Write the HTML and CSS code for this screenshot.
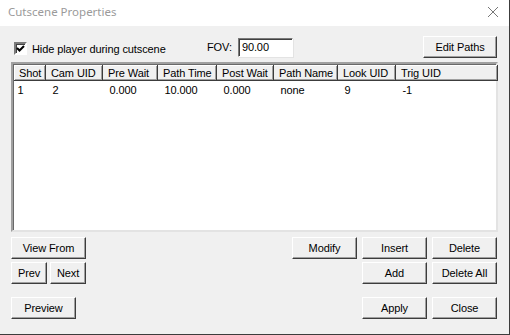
FILE: index.html
```html
<!DOCTYPE html>
<html lang="en">
<head>
    <meta charset="UTF-8">
    <title>Cutscene Properties</title>
    <link rel="stylesheet" href="styles.css">
</head>
<body>
    <div class="window">
        <div class="titlebar">
            <span class="title">Cutscene Properties</span>
            <svg class="close" width="12" height="12" viewBox="0 0 12 12">
                <path d="M1 1 L11 11 M11 1 L1 11" stroke="#777" stroke-width="1" fill="none"/>
            </svg>
        </div>

        <div class="top-row">
            <label class="check">
                <span class="check-box">
                    <svg width="9" height="9" viewBox="0 0 9 9">
                        <path d="M1 4 L3.5 6.5 L8 2" stroke="#000" stroke-width="2" fill="none"/>
                    </svg>
                </span>
                Hide player during cutscene
            </label>
            <div class="fov">
                <span>FOV:</span>
                <span class="field">90.00</span>
            </div>
            <button class="btn edit-paths">Edit Paths</button>
        </div>

        <div class="list">
            <table>
                <colgroup>
                    <col style="width: 31px">
                    <col style="width: 57px">
                    <col style="width: 55px">
                    <col style="width: 59px">
                    <col style="width: 57px">
                    <col style="width: 64px">
                    <col style="width: 58px">
                    <col>
                </colgroup>
                <thead>
                    <tr>
                        <th>Shot</th>
                        <th>Cam UID</th>
                        <th>Pre Wait</th>
                        <th>Path Time</th>
                        <th>Post Wait</th>
                        <th>Path Name</th>
                        <th>Look UID</th>
                        <th>Trig UID</th>
                    </tr>
                </thead>
                <tbody>
                    <tr>
                        <td>1</td>
                        <td>2</td>
                        <td>0.000</td>
                        <td>10.000</td>
                        <td>0.000</td>
                        <td>none</td>
                        <td>9</td>
                        <td>-1</td>
                    </tr>
                </tbody>
            </table>
        </div>

        <div class="button-row first">
            <div class="group">
                <button class="btn wide">View From</button>
            </div>
            <div class="group">
                <button class="btn">Modify</button>
                <button class="btn">Insert</button>
                <button class="btn">Delete</button>
            </div>
        </div>
        <div class="button-row">
            <div class="group small-gap">
                <button class="btn small">Prev</button>
                <button class="btn small">Next</button>
            </div>
            <div class="group">
                <button class="btn">Add</button>
                <button class="btn">Delete All</button>
            </div>
        </div>
        <div class="button-row last">
            <div class="group">
                <button class="btn">Preview</button>
            </div>
            <div class="group">
                <button class="btn">Apply</button>
                <button class="btn">Close</button>
            </div>
        </div>
    </div>
</body>
</html>
```

FILE: styles.css
```css
/* Classic Win32 dialog look */
body {
    margin: 0;
    background-color: #f0f0f0;
    font-family: "Liberation Sans", Arial, sans-serif;
    font-size: 11px;
    letter-spacing: -0.1px;
    color: #000;
}

.window {
    width: 509px;
    height: 334px;
    border-right: 1px solid #3c3c3c;
    border-bottom: 1px solid #3c3c3c;
    background-color: #f0f0f0;
}

.titlebar {
    height: 26px;
    background-color: #fff;
    display: flex;
    align-items: center;
    justify-content: space-between;
    padding: 0 10px 0 8px;
}

.title {
    font-family: "Noto Sans", "Open Sans", sans-serif;
    font-size: 11.5px;
    letter-spacing: 0;
    color: #9a9a9a;
    margin-top: -3px;
}

.close {
    margin-top: -2px;
}

.top-row {
    display: flex;
    align-items: center;
    height: 22px;
    margin: 10px 12px 0 14px;
}

.check {
    display: flex;
    align-items: center;
    gap: 5px;
    width: 193px;
    margin-top: 3px;
}

.check-box {
    width: 9px;
    height: 9px;
    background-color: #fff;
    border: 2px solid;
    border-color: #7a7a7a #fff #fff #7a7a7a;
    box-shadow: inset 1px 1px #404040;
    display: flex;
    align-items: center;
    justify-content: center;
}

.fov {
    display: flex;
    align-items: center;
    gap: 6px;
    flex: 1;
}

.field {
    width: 50px;
    height: 17px;
    line-height: 16px;
    padding-left: 3px;
    background-color: #fff;
    border: 1px solid;
    border-color: #7a7a7a #fff #fff #7a7a7a;
    box-shadow: inset 1px 1px #404040, 1px 1px #e3e3e3;
}

.btn {
    font-family: "Liberation Sans", Arial, sans-serif;
    font-size: 11px;
    letter-spacing: -0.1px;
    color: #000;
    width: 65px;
    height: 22px;
    padding: 0 0 1px;
    background-color: #f0f0f0;
    border: 1px solid;
    border-color: #fff #3c3c3c #3c3c3c #fff;
    box-shadow: inset -1px -1px #a0a0a0;
}

.edit-paths {
    width: 74px;
}

.list {
    height: 165px;
    margin: 4px 11px 0 11px;
    background-color: #fff;
    border: 2px solid;
    border-color: #a0a0a0 #e3e3e3 #e3e3e3 #a0a0a0;
    box-shadow: inset 1px 1px #696969;
    padding: 1px 0 0 1px;
}

table {
    width: 484px;
    border-collapse: collapse;
    table-layout: fixed;
}

th {
    height: 15px;
    padding: 0 0 1px 5px;
    font-weight: normal;
    text-align: left;
    background-color: #f0f0f0;
    border: 1px solid;
    border-color: #fff #3c3c3c #3c3c3c #fff;
    box-shadow: inset -1px -1px #a0a0a0;
    white-space: nowrap;
    box-sizing: border-box;
}

th:first-child {
    padding-left: 4px;
}

td {
    padding: 3px 0 0 7px;
    white-space: nowrap;
}

td:first-child {
    padding-left: 3px;
}

.button-row {
    display: flex;
    justify-content: space-between;
    margin: 3px 12px 0 11px;
}

.button-row.first {
    margin-top: 5px;
}

.button-row.last {
    margin-top: 13px;
}

.group {
    display: flex;
    gap: 5px;
}

.group.small-gap {
    gap: 3px;
}

.wide {
    width: 75px;
}

.small {
    width: 36px;
}
```
